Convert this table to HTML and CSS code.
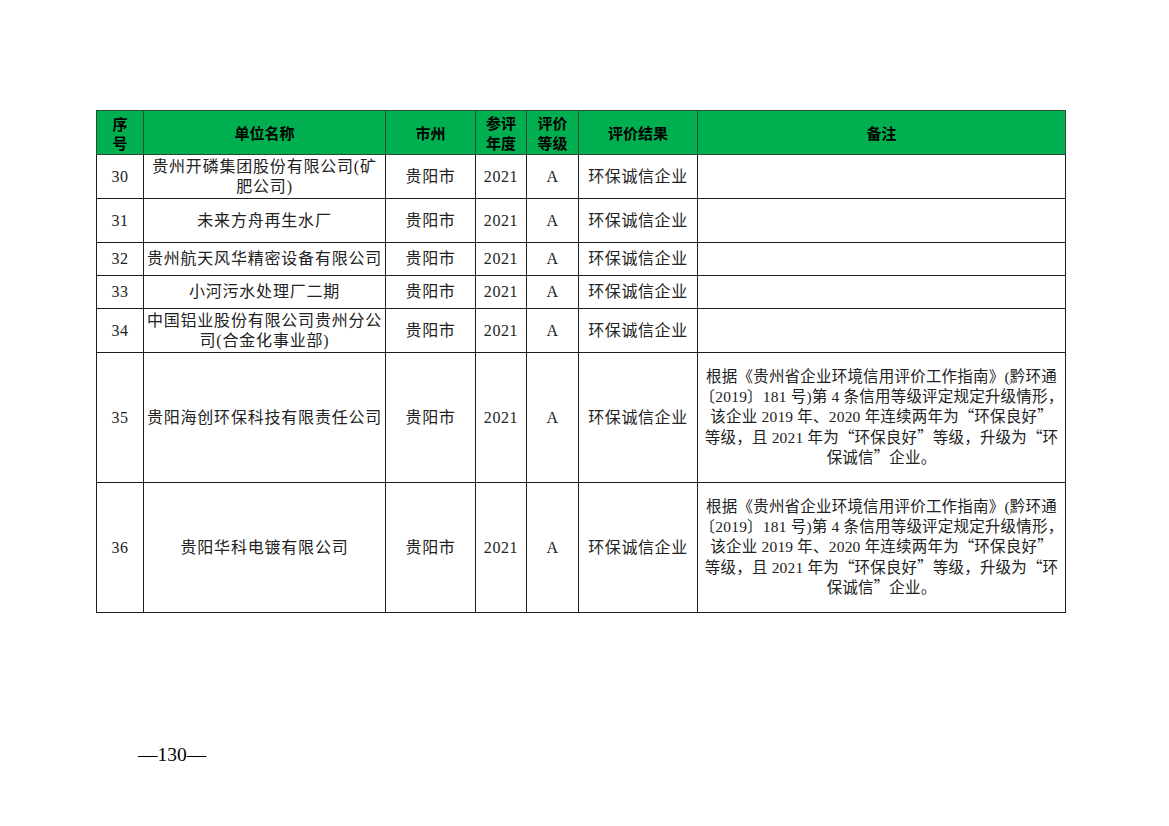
FILE: index.html
```html
<!DOCTYPE html>
<html lang="zh-CN">
<head>
<meta charset="utf-8">
<title>环保诚信企业名单</title>
<link rel="stylesheet" href="styles.css">
</head>
<body>
<div class="page">
<table class="grid">
  <colgroup>
    <col class="c-no"><col class="c-name"><col class="c-city"><col class="c-year"><col class="c-grade"><col class="c-result"><col class="c-note">
  </colgroup>
  <thead>
    <tr class="r-head">
      <th class="th-no">序<br>号</th>
      <th>单位名称</th>
      <th>市州</th>
      <th>参评<br>年度</th>
      <th>评价<br>等级</th>
      <th>评价结果</th>
      <th>备注</th>
    </tr>
  </thead>
  <tbody>
    <tr class="r-44">
      <td>30</td>
      <td class="name">贵州开磷集团股份有限公司(矿<br>肥公司)</td>
      <td>贵阳市</td><td>2021</td><td>A</td><td>环保诚信企业</td><td></td>
    </tr>
    <tr class="r-44">
      <td>31</td>
      <td class="name">未来方舟再生水厂</td>
      <td>贵阳市</td><td>2021</td><td>A</td><td>环保诚信企业</td><td></td>
    </tr>
    <tr class="r-33">
      <td>32</td>
      <td class="name">贵州航天风华精密设备有限公司</td>
      <td>贵阳市</td><td>2021</td><td>A</td><td>环保诚信企业</td><td></td>
    </tr>
    <tr class="r-33">
      <td>33</td>
      <td class="name">小河污水处理厂二期</td>
      <td>贵阳市</td><td>2021</td><td>A</td><td>环保诚信企业</td><td></td>
    </tr>
    <tr class="r-44">
      <td>34</td>
      <td class="name">中国铝业股份有限公司贵州分公<br>司(合金化事业部)</td>
      <td>贵阳市</td><td>2021</td><td>A</td><td>环保诚信企业</td><td></td>
    </tr>
    <tr class="r-130">
      <td>35</td>
      <td class="name">贵阳海创环保科技有限责任公司</td>
      <td>贵阳市</td><td>2021</td><td>A</td><td>环保诚信企业</td>
      <td class="note">根据《贵州省企业环境信用评价工作指南》(黔环通<br>〔2019〕181 号)第 4 条信用等级评定规定升级情形，<br>该企业 2019 年、2020 年连续两年为<span class="q">“</span>环保良好<span class="q">”</span><br>等级，且 2021 年为<span class="q">“</span>环保良好<span class="q">”</span>等级，升级为<span class="q">“</span>环<br>保诚信<span class="q">”</span>企业。</td>
    </tr>
    <tr class="r-130">
      <td>36</td>
      <td class="name">贵阳华科电镀有限公司</td>
      <td>贵阳市</td><td>2021</td><td>A</td><td>环保诚信企业</td>
      <td class="note">根据《贵州省企业环境信用评价工作指南》(黔环通<br>〔2019〕181 号)第 4 条信用等级评定规定升级情形，<br>该企业 2019 年、2020 年连续两年为<span class="q">“</span>环保良好<span class="q">”</span><br>等级，且 2021 年为<span class="q">“</span>环保良好<span class="q">”</span>等级，升级为<span class="q">“</span>环<br>保诚信<span class="q">”</span>企业。</td>
    </tr>
  </tbody>
</table>
<div class="page-no">—130—</div>
</div>
</body>
</html>
```

FILE: styles.css
```css
html, body {
  margin: 0;
  padding: 0;
  background: #ffffff;
}

.page {
  width: 1169px;
  height: 826px;
  padding-top: 110px;
  padding-left: 96px;
  box-sizing: border-box;
  font-family: "Liberation Serif", "Noto Sans CJK SC", serif;
  color: #1a1a1a;
}

.grid {
  border-collapse: collapse;
  table-layout: fixed;
  width: 969px;
}

.c-no { width: 47px; }
.c-name { width: 242px; }
.c-city { width: 90px; }
.c-year { width: 51px; }
.c-grade { width: 52px; }
.c-result { width: 119px; }
.c-note { width: 368px; }

.grid th,
.grid td {
  border: 1px solid #1e1e1e;
  padding: 0;
  text-align: center;
  vertical-align: middle;
  white-space: nowrap;
  overflow: hidden;
}

.grid th {
  background: #00b050;
  color: #000000;
  font-family: "Noto Sans CJK SC", sans-serif;
  font-weight: 700;
  font-size: 15px;
  line-height: 20px;
  height: 43px;
  border-color: #2a4a34;
}

.grid th.th-no {
  font-size: 15px;
  line-height: 19px;
}

.grid td {
  font-size: 16px;
  line-height: 20px;
  letter-spacing: 0.6px;
  color: #222222;
}

.grid td.name {
  letter-spacing: 0.8px;
}

.r-44 td { height: 43px; }
.r-33 td { height: 32px; }
.r-130 td { height: 129px; }

.grid td.note {
  font-size: 15.5px;
  line-height: 19.5px;
  letter-spacing: 0.2px;
}

.q {
  font-family: "Noto Sans CJK SC", sans-serif;
  font-feature-settings: "fwid" 1;
  letter-spacing: 0;
}

.page-no {
  margin-top: 131px;
  margin-left: 42px;
  font-family: "Liberation Serif", serif;
  font-size: 19.5px;
  line-height: 22px;
  color: #000000;
}
```
